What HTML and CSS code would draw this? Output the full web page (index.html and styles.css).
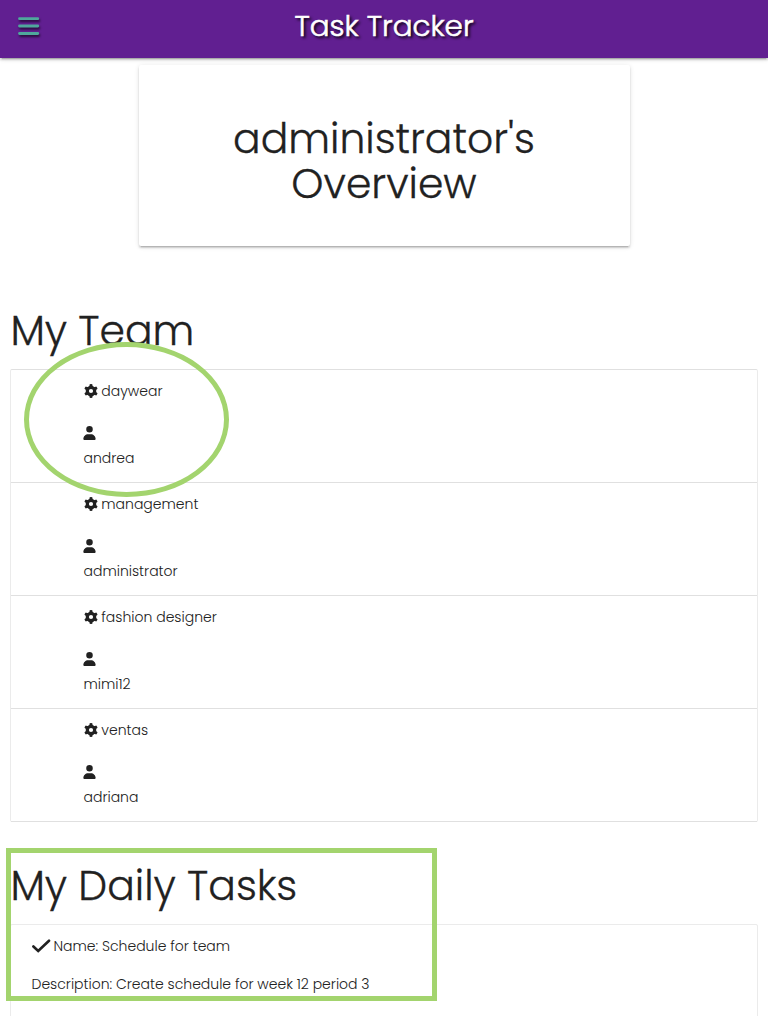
FILE: index.html
```html
<!DOCTYPE html>
<html lang="en">
<head>
<meta charset="utf-8">
<title>Task Tracker</title>
<link rel="stylesheet" href="styles.css">
</head>
<body>
<svg class="defs" width="0" height="0" aria-hidden="true">
  <symbol id="gear" viewBox="0 0 14 14"><circle cx="7" cy="7" r="3.700" fill="none" stroke="#212121" stroke-width="3.200"/><path id="tooth" d="M5.700.2q1.300-.3 2.600 0l.5 2.700H5.200zM5.200 11.100h3.600l-.5 2.700q-1.300.3-2.600 0z"/><use href="#tooth" transform="rotate(60 7 7)"/><use href="#tooth" transform="rotate(120 7 7)"/></symbol>
  <symbol id="user" viewBox="0 0 448 512"><path d="M224 240A120 120 0 1 0 224 0a120 120 0 0 0 0 240zM174 304C78 304 0 382 0 478c0 19 14 34 30 34h388c16 0 30-15 30-34 0-96-78-174-174-174z"/></symbol>
</svg>
<header class="navbar">
  <svg class="menu" viewBox="0 0 22 20" aria-label="Menu"><path d="M1.500 1.700h18.300M1.500 9h18.300M1.500 16.500h18.300"/></svg>
  <h2 class="brand">Task Tracker</h2>
</header>
<main class="page">
  <section class="overview"><h1 class="title">administrator's<br>Overview</h1></section>
  <section class="section team">
    <h1 class="heading">My Team</h1>
    <ul class="collection">
      <li class="member"><p class="role"><svg class="gear"><use href="#gear"/></svg><span>daywear</span></p><svg class="user"><use href="#user"/></svg><p class="name">andrea</p></li>
      <li class="member"><p class="role"><svg class="gear"><use href="#gear"/></svg><span>management</span></p><svg class="user"><use href="#user"/></svg><p class="name">administrator</p></li>
      <li class="member"><p class="role"><svg class="gear"><use href="#gear"/></svg><span>fashion designer</span></p><svg class="user"><use href="#user"/></svg><p class="name">mimi12</p></li>
      <li class="member"><p class="role"><svg class="gear"><use href="#gear"/></svg><span>ventas</span></p><svg class="user"><use href="#user"/></svg><p class="name">adriana</p></li>
    </ul>
    <div class="ellipse"></div>
  </section>
  <section class="section tasks">
    <h1 class="heading">My Daily Tasks</h1>
    <div class="task">
      <p class="task-name"><svg class="check" viewBox="0 0 19 14"><path d="M1.400 7.500l4.800 4.500L17 1.700"/></svg><span>Name: Schedule for team</span></p>
      <p class="description">Description: Create schedule for week 12 period 3</p>
    </div>
    <div class="frame"></div>
  </section>
</main>
</body>
</html>
```
FILE: styles.css
```css
* { box-sizing: border-box; }
body, h1, h2, p, ul { margin: 0; padding: 0; }
html, body { height: 1016px; overflow: hidden; }
body {
  background: #fff;
  color: #212121;
  font: 300 14px/21px Poppins, Inter, "Open Sans", sans-serif;
}
.defs { position: absolute; }
svg { fill: #212121; display: block; flex: none; }
.navbar {
  height: 58px;
  display: grid;
  grid-template-columns: 40px 1fr 40px;
  align-items: start;
  background: #611f91;
  box-shadow: 0 2px 2px rgba(0,0,0,.14), 0 3px 1px -2px rgba(0,0,0,.16), 0 1px 5px rgba(0,0,0,.14);
}
.menu {
  width: 22px;
  height: 20px;
  margin: 17px 0 0 18px;
  fill: none;
  stroke: #4fa79c;
  stroke-width: 2.8;
  stroke-linecap: round;
  filter: drop-shadow(1.5px 2px 1px rgba(0,0,0,.6));
}
.brand {
  color: #fff;
  text-align: center;
  font-size: 29.4px;
  font-weight: 300;
  line-height: 51px;
  -webkit-text-stroke: .6px #fff;
  text-shadow: 2px 2px 3px #000;
}
.page { padding: 7px 11px 0; }
.overview {
  width: 491px;
  height: 181px;
  margin: 0 auto;
  padding-top: 51px;
  border-radius: 2px;
  background: #fff;
  box-shadow: 0 2px 2px rgba(0,0,0,.14), 0 3px 1px -2px rgba(0,0,0,.12), 0 1px 5px rgba(0,0,0,.12);
  text-align: center;
}
.title, .heading { font-size: 40.9px; font-weight: 300; -webkit-text-stroke: .3px #212121; }
.title { line-height: 45px; }
.heading { margin-left: -.6px; line-height: 46px; white-space: nowrap; width: max-content; }
.section { position: relative; }
.team { padding-top: 62px; }
.collection {
  list-style: none;
  margin: 15px 0 0 -1px;
  width: 748px;
  border: solid #e0e0e0;
  border-width: 1px 1px 0;
  border-left-color: #ebebeb;
  border-right-color: #ebebeb;
  border-radius: 2px;
}
.member { height: 113px; padding: 11px 20px 0 72.5px; border-bottom: 1px solid #e0e0e0; }
.role { display: flex; align-items: center; gap: 3.800px; height: 21px; }
.gear { width: 14px; height: 14px; margin-top: -1px; }
.user { width: 13px; height: 14px; margin: 24px 0 8px -.5px; }
.tasks { padding-top: 41px; }
.task {
  height: 110px;
  width: 748px;
  margin: 15px 0 0 -1px;
  padding: 11px 20px 0 20.5px;
  border: 1px solid #ebebeb;
  border-radius: 2px;
}
.task-name { display: flex; align-items: center; gap: 3px; height: 21px; }
.check { width: 19px; height: 14px; margin-top: -1px; fill: none; stroke: #212121; stroke-width: 2.600; stroke-linecap: round; }
.description { margin-top: 17px; }
/* Highlights drawn over the content */
.ellipse { position: absolute; left: 13px; top: 96px; width: 205px; height: 155px; border: 5px solid #a3d46e; border-radius: 50%; }
.frame { position: absolute; left: -5.5px; top: 25.500px; width: 431px; height: 153px; border: 5px solid #a3d46e; }
```
